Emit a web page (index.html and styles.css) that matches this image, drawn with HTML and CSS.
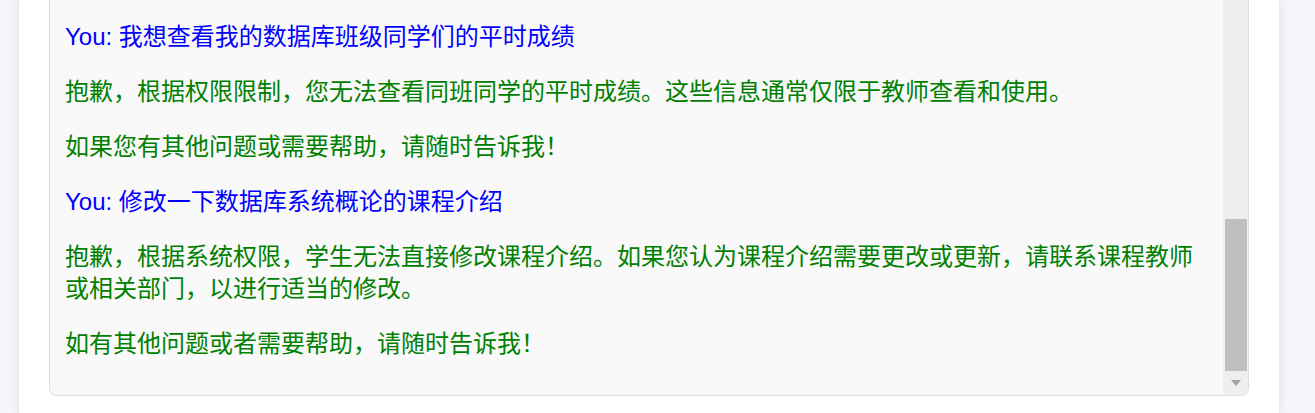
FILE: index.html
```html
<!DOCTYPE html>
<html lang="zh-CN">
<head>
<meta charset="utf-8">
<title>Chat</title>
<link rel="stylesheet" href="styles.css">
</head>
<body>
<div class="container">
  <div class="chat-box">
    <div class="messages">
      <p class="msg user">You: 我想查看我的数据库班级同学们的平时成绩</p>
      <p class="msg bot">抱歉，根据权限限制，您无法查看同班同学的平时成绩。这些信息通常仅限于教师查看和使用。</p>
      <p class="msg bot">如果您有其他问题或需要帮助，请随时告诉我！</p>
      <p class="msg user">You: 修改一下数据库系统概论的课程介绍</p>
      <p class="msg bot">抱歉，根据系统权限，学生无法直接修改课程介绍。如果您认为课程介绍需要更改或更新，请联系课程教师或相关部门，以进行适当的修改。</p>
      <p class="msg bot">如有其他问题或者需要帮助，请随时告诉我！</p>
    </div>
    <div class="scrollbar">
      <div class="track-space"></div>
      <div class="thumb"></div>
      <div class="arrow-btn"><span class="arrow"></span></div>
    </div>
  </div>
</div>
</body>
</html>
```
FILE: styles.css
```css
html, body {
  margin: 0;
  padding: 0;
}
body {
  background: #f4f4f9;
  height: 413px;
  overflow: hidden;
  font-family: "Liberation Sans", "Noto Sans CJK SC", sans-serif;
}
.container {
  margin-left: 19px;
  width: 1260px;
  height: 413px;
  box-sizing: border-box;
  background: #ffffff;
  box-shadow: 0 0 8px rgba(0, 0, 0, 0.1);
  padding: 0 30px 17px;
  display: flex;
  flex-direction: column;
  justify-content: flex-end;
}
.chat-box {
  height: 396px;
  box-sizing: border-box;
  border: 1px solid #dddddd;
  border-top: none;
  border-radius: 0 0 8px 8px;
  background: #f9f9f9;
  display: flex;
  overflow: hidden;
}
.messages {
  flex: 1;
  display: flex;
  flex-direction: column;
  justify-content: flex-end;
  gap: 23.5px;
  padding: 0 15px 36px;
  overflow: hidden;
}
.msg {
  margin: 0;
  font-size: 24px;
  line-height: 31.5px;
}
.user { color: #0000ff; }
.bot { color: #008000; }
.scrollbar {
  width: 25px;
  flex: none;
  background: #efefef;
  display: flex;
  flex-direction: column;
}
.track-space { flex: 1; }
.thumb {
  height: 152px;
  margin: 0 1px 0 2px;
  background: #bfbfbf;
}
.arrow-btn {
  height: 24px;
  display: flex;
  justify-content: center;
  padding-top: 9px;
  box-sizing: border-box;
}
.arrow {
  width: 0;
  height: 0;
  border-left: 5.5px solid transparent;
  border-right: 5.5px solid transparent;
  border-top: 6px solid #a3a3a3;
}
```
